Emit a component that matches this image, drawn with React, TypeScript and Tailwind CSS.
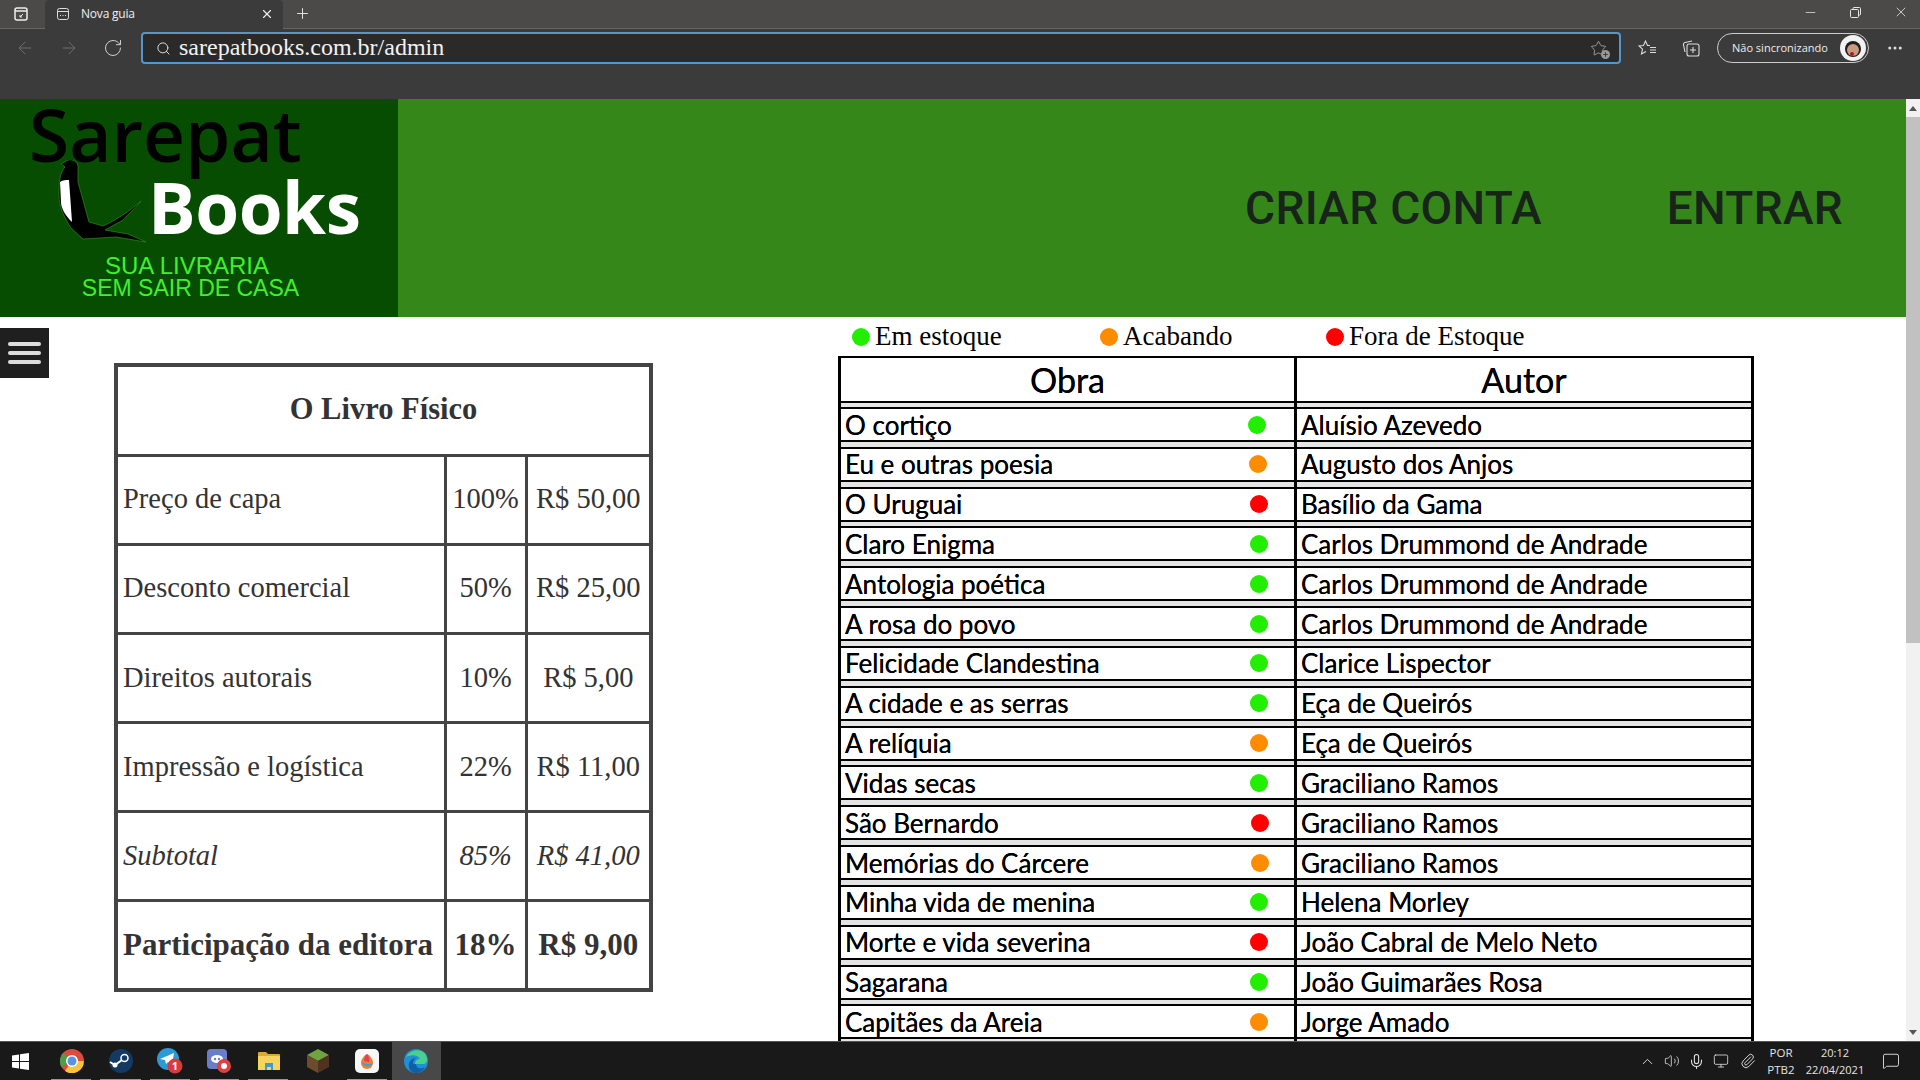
import React from "react";
import { ArrowLeft, ArrowRight, RotateCw, Search, Star, X, Plus, Minus, MoreHorizontal, ChevronUp, Volume2, Mic, Monitor, Paperclip, MessageSquare } from "lucide-react";

const G = "bg-[#22ee00]";
const O = "bg-[#ff8c00]";
const R = "bg-[#ff0000]";

const obras: [string, string, string, string][] = [
  ["O cortiço", G, "Aluísio Azevedo", "mr-[28px]"],
  ["Eu e outras poesia", O, "Augusto dos Anjos", "mr-[27px]"],
  ["O Uruguai", R, "Basílio da Gama", "mr-[26px]"],
  ["Claro Enigma", G, "Carlos Drummond de Andrade", "mr-[26px]"],
  ["Antologia poética", G, "Carlos Drummond de Andrade", "mr-[26px]"],
  ["A rosa do povo", G, "Carlos Drummond de Andrade", "mr-[26px]"],
  ["Felicidade Clandestina", G, "Clarice Lispector", "mr-[26px]"],
  ["A cidade e as serras", G, "Eça de Queirós", "mr-[26px]"],
  ["A relíquia", O, "Eça de Queirós", "mr-[26px]"],
  ["Vidas secas", G, "Graciliano Ramos", "mr-[26px]"],
  ["São Bernardo", R, "Graciliano Ramos", "mr-[25px]"],
  ["Memórias do Cárcere", O, "Graciliano Ramos", "mr-[25px]"],
  ["Minha vida de menina", G, "Helena Morley", "mr-[26px]"],
  ["Morte e vida severina", R, "João Cabral de Melo Neto", "mr-[26px]"],
  ["Sagarana", G, "João Guimarães Rosa", "mr-[26px]"],
  ["Capitães da Areia", O, "Jorge Amado", "mr-[26px]"],
];

const custos: [string, string, string, string][] = [
  ["Preço de capa", "100%", "R$ 50,00", ""],
  ["Desconto comercial", "50%", "R$ 25,00", ""],
  ["Direitos autorais", "10%", "R$ 5,00", ""],
  ["Impressão e logística", "22%", "R$ 11,00", ""],
  ["Subtotal", "85%", "R$ 41,00", "italic"],
  ["Participação da editora", "18%", "R$ 9,00", "font-bold text-[31px]"],
];

function ChromeBar() {
  return (
    <div className="h-[99px] bg-[#3b3b3b] flex flex-col text-[#e6e6e6] font-['Open_Sans',sans-serif]">
      <div className="h-[29px] bg-[#4b4a48] border-b border-[#666] flex items-stretch">
        <div className="w-[45px] flex items-center justify-center pr-[3px]">
          <svg width="16" height="16" viewBox="0 0 16 16" fill="none" stroke="#eee" strokeWidth="1.5"><rect x="2" y="2" width="12" height="12" rx="2" /><path d="M2 5h12" /><path d="M10 8 7 11m0-2v2h2" strokeWidth="1" /></svg>
        </div>
        <div className="w-[238px] h-[29px] bg-[#3b3b3b] rounded-t-[4px] flex items-center pl-[11px] pr-[9px] pb-[2px]">
          <svg width="14" height="14" viewBox="0 0 14 14" fill="none" stroke="#ddd" strokeWidth="1"><rect x="1.500" y="1.500" width="11" height="11" rx="2" /><path d="M1.500 4.500h11" /><path d="M4 8.500h1m1.500 0h1m1.500 0h1" /></svg>
          <span className="ml-[11px] text-[12px] tracking-[-0.2px] text-[#f0f0f0] flex-1">Nova guia</span>
          <X size={14} color="#eee" />
        </div>
        <div className="ml-[11px] flex items-center pb-[2px]"><Plus size={17} color="#eee" strokeWidth={1.3} /></div>
        <div className="flex-1" />
        <div className="flex items-center pb-[4px] pr-[11px] gap-[31px]">
          <Minus size={15} strokeWidth={1.2} />
          <svg width="13" height="13" viewBox="0 0 13 13" fill="none" stroke="#e6e6e6" strokeWidth="1"><rect x="1.500" y="3.500" width="8" height="8" rx="1" /><path d="M4 3.500V2.500a1 1 0 0 1 1-1h5.500a1 1 0 0 1 1 1V8a1 1 0 0 1-1 1h-1" /></svg>
          <X size={16} strokeWidth={1.2} />
        </div>
      </div>
      <div className="h-[30px] mt-[4px] flex items-center">
        <div className="w-[141px] flex items-center pl-[15px] gap-[24px]">
          <ArrowLeft size={20} color="#6e6e6e" strokeWidth={1.2} />
          <ArrowRight size={20} color="#6e6e6e" strokeWidth={1.2} />
          <RotateCw size={20} color="#cfcfcf" strokeWidth={1.2} />
        </div>
        <div className="w-[1480px] h-[32px] bg-[#2a2a2a] border-2 border-[#5596cb] rounded-[4px] flex items-center pl-[13px] pr-[12px]">
          <Search size={15} color="#ddd" strokeWidth={1.6} />
          <span className="ml-[8px] mb-[2px] text-[24px] leading-none text-[#f2f2f2] font-['Liberation_Serif',serif] flex-1">sarepatbooks.com.br/admin</span>
          <span className="relative">
            <Star size={17} color="#aaa" strokeWidth={1.2} />
            <span className="absolute right-[-3px] bottom-[-2px] w-[9px] h-[9px] rounded-full bg-[#999] text-[#222] flex items-center justify-center"><Plus size={7} strokeWidth={2.5} /></span>
          </span>
        </div>
        <div className="ml-[13px] w-[28px] flex justify-center">
          <svg width="20" height="18" viewBox="0 0 20 18" fill="none" stroke="#ddd" strokeWidth="1.1"><path d="M12 6.500H9.500L7.500 2 5.500 6.500 1 7l3.500 3.200L3.500 15l4.500-2.500" /><path d="M12 8.500h6M12 11h6M12 13.500h6" /></svg>
        </div>
        <div className="ml-[15px] w-[28px] flex justify-center">
          <svg width="18" height="18" viewBox="0 0 18 18" fill="none" stroke="#ddd" strokeWidth="1.1"><rect x="5" y="5" width="12" height="12" rx="2" /><path d="M11 8v6M8 11h6" /><path d="M3 13 1.500 6a2 2 0 0 1 1.500-2.500L10 2" /></svg>
        </div>
        <div className="ml-[12px] w-[152px] h-[30px] border border-[#ccc] rounded-full flex items-center justify-between pl-[14px] pr-[2px]">
          <span className="text-[11px] text-[#eee]">Não sincronizando</span>
          <svg width="26" height="26" viewBox="0 0 26 26"><circle cx="13" cy="13" r="13" fill="#f2f2f2" /><circle cx="13" cy="14" r="8" fill="#1e1e1e" /><circle cx="13" cy="15" r="6" fill="#c89a80" /><circle cx="12" cy="19" r="2" fill="#b01818" /></svg>
        </div>
        <div className="ml-[17px]"><MoreHorizontal size={18} color="#ddd" /></div>
      </div>
    </div>
  );
}

function Logo() {
  return (
    <div className="w-[398px] h-full bg-[#064d02] shrink-0 flex flex-col font-['Open_Sans',sans-serif]">
      <div className="pl-[29px] h-[70px] mb-[-9px] text-[73px] leading-[70px] font-semibold text-black">Sarepat</div>
      <div className="flex h-[95px] pl-[58px]">
        <svg width="90" height="83" viewBox="0 0 90 83" className="shrink-0">
          <path d="M10 0C15-1 20 2 20 7 20 12 20 17 20 22L31 62 45 66C58 60 72 51 83 41 76 50 68 56 65 60L47 70 70 74 88 82 58 77 25 79 13 68C6 57 1 47 1 35 1 28 1 23 2 18 3 13 5 9 7 7L3 4Z" fill="#000" stroke="#2f8a1e" strokeWidth=".7" />
          <path d="M2 22C5 20 8 20 11 20 12 34 13 48 14 62 7 55 3 48 3 42Z" fill="#fff" />
        </svg>
        <div className="text-[71px] leading-[94px] font-bold text-white tracking-[-0.5px]">Books</div>
      </div>
      <div className="w-[381px] text-center text-[23px] leading-[22px] text-[#40f02c] font-['Liberation_Sans',sans-serif]">
        <div className="text-[24px] pr-[7px]">SUA LIVRARIA</div>
        <div>SEM SAIR DE CASA</div>
      </div>
    </div>
  );
}

function PageHeader() {
  return (
    <div className="h-[218px] bg-[#36871a] flex items-center">
      <Logo />
      <div className="flex-1 flex justify-end items-center pr-[63px] gap-[125px] text-[46px] font-medium text-[#18241a] font-['Roboto',sans-serif] tracking-[0.3px]">
        <span>CRIAR CONTA</span>
        <span>ENTRAR</span>
      </div>
    </div>
  );
}

function CostTable() {
  return (
    <table className="w-[535px] h-[629px] border-collapse border-4 border-[#444] text-[#333] font-['Liberation_Serif',serif] text-[28.5px] table-fixed">
      <colgroup>
        <col className="w-[329px]" />
        <col className="w-[81px]" />
        <col className="w-[125px]" />
      </colgroup>
      <thead>
        <tr className="h-[90px]">
          <th colSpan={3} className="border-[3px] border-[#444] pb-[1px] font-bold text-[30.5px] text-center">O Livro Físico</th>
        </tr>
      </thead>
      <tbody>
        {custos.map(([a, b, c, k]) => (
          <tr key={a} className={`h-[89px] ${k}`}>
            <td className="border-[3px] border-[#444] pl-[5px] whitespace-nowrap">{a}</td>
            <td className="border-[3px] border-[#444] text-center">{b}</td>
            <td className="border-[3px] border-[#444] text-center whitespace-nowrap">{c}</td>
          </tr>
        ))}
      </tbody>
    </table>
  );
}

function Legend() {
  const items: [string, string, string][] = [[G, "Em estoque", "w-[248px]"], [O, "Acabando", "w-[226px]"], [R, "Fora de Estoque", ""]];
  return (
    <div className="flex h-[39px] items-center pl-[14px] text-[27px] text-black font-['Liberation_Serif',serif]">
      {items.map(([c, t, w]) => (
        <div key={t} className={`flex items-center gap-[5px] ${w}`}>
          <span className={`w-[18px] h-[18px] rounded-full ${c}`} />
          <span>{t}</span>
        </div>
      ))}
    </div>
  );
}

function BookTable() {
  return (
    <div className="w-[916px] border-t-2 border-x-[3px] border-black text-black font-['Lato',sans-serif] text-[26px] [text-shadow:0_0_0.3px_#000]">
      <div className="flex h-[45px] border-b-2 border-black text-[34px] leading-none">
        <div className="w-[456px] border-r-[3px] border-black flex items-center justify-center">Obra</div>
        <div className="flex-1 flex items-center justify-center">Autor</div>
      </div>
      <div className="flex h-[4px] bg-[#e4e4e4]">
        <div className="w-[456px] border-r-[3px] border-black" />
      </div>
      {obras.map(([o, c, a, m]) => (
        <div key={o}>
          <div className="flex h-[35px] border-y-2 border-black leading-none">
            <div className="w-[456px] border-r-[3px] border-black flex items-center pl-[4px]">
              <span className="flex-1">{o}</span>
              <span className={`w-[18px] h-[18px] rounded-full ${c} ${m}`} />
            </div>
            <div className="flex-1 flex items-center pl-[4px]">{a}</div>
          </div>
          <div className="flex h-[4.84px] bg-[#e4e4e4]">
            <div className="w-[456px] border-r-[3px] border-black" />
          </div>
        </div>
      ))}
    </div>
  );
}

function Scrollbar() {
  return (
    <div className="w-[14px] shrink-0 bg-[#f1f1f1] flex flex-col items-center">
      <div className="h-[18px] flex items-center"><span className="w-0 h-0 border-x-[4px] border-x-transparent border-b-[5px] border-b-[#555]" /></div>
      <div className="w-full h-[526px] bg-[#c1c1c1]" />
      <div className="flex-1" />
      <div className="h-[18px] flex items-center"><span className="w-0 h-0 border-x-[4px] border-x-transparent border-t-[5px] border-t-[#555]" /></div>
    </div>
  );
}

function TaskIcon({ children, open, active }: { children: React.ReactNode; open?: boolean; active?: boolean }) {
  return (
    <div className={`relative w-[49.25px] h-[38px] flex items-center justify-center ${active ? "bg-[#484848]" : ""}`}>
      {children}
      {open && <span className="absolute bottom-0 left-[4px] right-[5px] h-[1px] bg-[#999999]" />}
    </div>
  );
}

function Taskbar() {
  return (
    <div className="h-[39px] bg-[#191919] border-t border-[#555] flex items-center shrink-0 font-['Open_Sans',sans-serif] text-[#e4e4e4]">
      <div className="w-[47px] flex pl-[12px]">
        <svg width="17" height="17" viewBox="0 0 17 17" fill="#fff"><path d="M0 2.500 7 1.500V8H0ZM8 1.300 17 0v8H8ZM0 9h7v6.500L0 14.500ZM8 9h9v8l-9-1.300Z" /></svg>
      </div>
      <div className="flex items-center">
        <TaskIcon open>
          <svg width="24" height="24" viewBox="0 0 24 24"><circle cx="12" cy="12" r="12" fill="#dd4b3e" /><path d="M12 12 1.600 18A12 12 0 0 1 3 4Z" fill="#4aa04a" /><path d="M12 12h11.800A12 12 0 0 1 5 22Z" fill="#f6c53a" /><circle cx="12" cy="12" r="6" fill="#fff" /><circle cx="12" cy="12" r="4.500" fill="#5a92e8" /></svg>
        </TaskIcon>
        <TaskIcon open>
          <svg width="24" height="24" viewBox="0 0 24 24"><circle cx="12" cy="12" r="12" fill="#123a62" /><circle cx="15.500" cy="9" r="3.500" fill="none" stroke="#fff" strokeWidth="1.500" /><circle cx="6" cy="16" r="2.500" fill="#fff" /><path d="m1 13 5 3 7-5" stroke="#fff" strokeWidth="2" fill="none" /></svg>
        </TaskIcon>
        <TaskIcon open>
          <svg width="26" height="26" viewBox="0 0 26 26"><circle cx="11" cy="11" r="11" fill="#2d9ad6" /><path d="M3 11 17 5l-2 12-4-3-2 2-1-4Z" fill="#fff" /><circle cx="18" cy="18" r="7.500" fill="#d93a3a" /><text x="18" y="22" textAnchor="middle" fontSize="11" fontWeight="700" fill="#fff" fontFamily="Open Sans">1</text></svg>
        </TaskIcon>
        <TaskIcon open>
          <svg width="26" height="26" viewBox="0 0 26 26"><rect x="1" y="1" width="20" height="20" rx="4" fill="#6a7ec8" /><ellipse cx="11" cy="11" rx="6" ry="4" fill="#fff" /><circle cx="9" cy="11" r="1.200" fill="#6a7ec8" /><circle cx="13" cy="11" r="1.200" fill="#6a7ec8" /><circle cx="18" cy="18" r="7" fill="#e04040" /><circle cx="18" cy="18" r="3" fill="#fff" /></svg>
        </TaskIcon>
        <TaskIcon open>
          <svg width="24" height="22" viewBox="0 0 24 22"><path d="M1 3a1 1 0 0 1 1-1h7l2 2h11a1 1 0 0 1 1 1v2H1Z" fill="#e0a82e" /><rect x="1" y="6" width="22" height="14" fill="#f7d45c" /><rect x="8" y="13" width="8" height="7" fill="#3b9ad9" /><rect x="10" y="17" width="4" height="3" fill="#f7d45c" /></svg>
        </TaskIcon>
        <TaskIcon>
          <svg width="24" height="26" viewBox="0 0 24 26"><path d="M12 1 23 7 12 13 1 7Z" fill="#6ea540" /><path d="M1 7l11 6v12L1 19Z" fill="#6e4a2e" /><path d="M23 7 12 13v12l11-6Z" fill="#4f3320" /></svg>
        </TaskIcon>
        <TaskIcon open>
          <svg width="24" height="24" viewBox="0 0 24 24"><rect width="24" height="24" rx="5" fill="#f7f7f7" /><path d="M12 5c4 2 6 6 6 9a6 6 0 0 1-12 0c0-3 2-7 6-9Z" fill="#f08030" /><path d="M7 13a6 6 0 0 0 11 1c-3 2-8 1-11-1Z" fill="#3aa0dc" /><path d="M12 5c2 2 3 5 2 8l-5-1c0-3 1-5 3-7Z" fill="#e0405a" /></svg>
        </TaskIcon>
        <TaskIcon active>
          <svg width="24" height="24" viewBox="0 0 24 24"><circle cx="12" cy="12" r="12" fill="#1f8fd6" /><path d="M2 8C6 0 18-1 22 6c2 4 1 9-2 9H11c0-4 3-5 5-5-3-5-10-4-14-2Z" fill="#48d08c" /><path d="M12 15c0 4 4 6 9 3-2 4-6 6-9 6-6 0-8-6-7-10 1-3 4-5 7-5-2 1-3 3-3 6Z" fill="#0f5fa8" /></svg>
        </TaskIcon>
      </div>
      <div className="flex-1" />
      <div className="flex items-center pr-[20px]">
        <ChevronUp size={17} strokeWidth={1.3} />
        <Volume2 size={16} strokeWidth={1.2} className="ml-[8px]" />
        <Mic size={17} strokeWidth={1.5} className="ml-[8px]" />
        <Monitor size={16} strokeWidth={1.2} className="ml-[8px]" />
        <Paperclip size={16} strokeWidth={1.4} className="ml-[11px]" />
        <div className="ml-[5px] w-[40px] text-center text-[11.5px] leading-[17px]">
          <div>POR</div>
          <div>PTB2</div>
        </div>
        <div className="ml-[4px] w-[60px] text-center text-[11px] leading-[17px] whitespace-nowrap">
          <div>20:12</div>
          <div>22/04/2021</div>
        </div>
        <MessageSquare size={18} strokeWidth={1.2} className="ml-[17px]" />
      </div>
    </div>
  );
}

export default function App() {
  return (
    <div className="w-[1920px] h-[1080px] overflow-hidden flex flex-col bg-white">
      <ChromeBar />
      <div className="flex-1 min-h-0 flex overflow-hidden">
        <div className="flex-1 flex flex-col min-w-0 overflow-hidden">
          <PageHeader />
          <div className="relative flex-1 flex min-h-0 overflow-hidden">
            <button className="absolute left-0 top-[11px] w-[49px] h-[50px] bg-[#1f1f1f] flex flex-col items-center justify-center gap-[5px]">
              <span className="w-[33px] h-[4px] rounded-full bg-[#dddddd]" />
              <span className="w-[33px] h-[4px] rounded-full bg-[#dddddd]" />
              <span className="w-[33px] h-[4px] rounded-full bg-[#dddddd]" />
            </button>
            <div className="w-[838px] shrink-0 pl-[114px] pt-[46px]">
              <CostTable />
            </div>
            <div className="flex-1">
              <Legend />
              <BookTable />
            </div>
          </div>
        </div>
        <Scrollbar />
      </div>
      <Taskbar />
    </div>
  );
}
